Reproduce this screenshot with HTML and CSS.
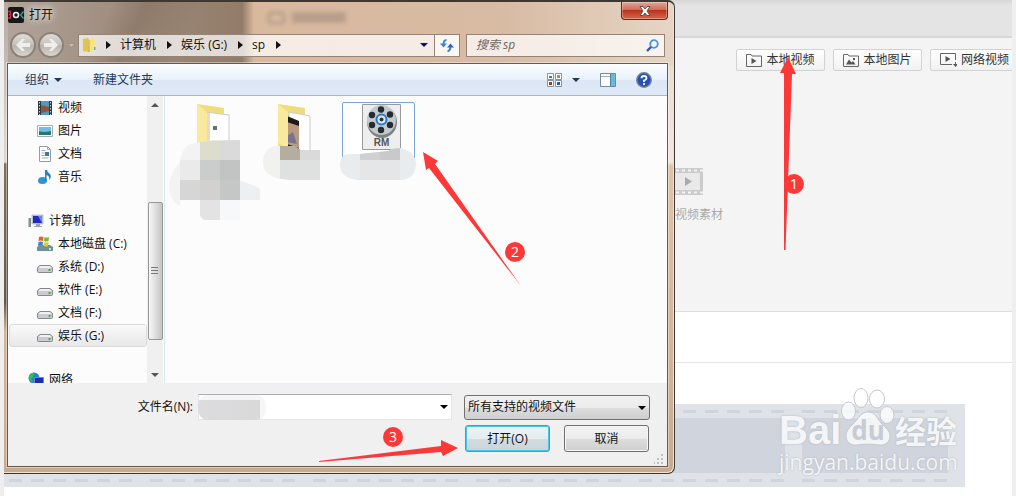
FILE: index.html
```html
<!DOCTYPE html>
<html lang="zh-CN">
<head>
    <meta charset="utf-8">
    <title>打开</title>
    <link rel="stylesheet" href="styles.css">
</head>
<body>
    <div class="app">
        <header class="app-header"></header>
        <section class="media">
            <div class="media-toolbar">
                <button class="media-btn">
                    <svg width="16" height="13" viewBox="0 0 16 13" fill="none" stroke="#666"><path d="M.5 12.500V.5H5l1 1.500H15.500V12.500Z"/><path d="M5.500 4v6l5-3z" fill="#555" stroke="none"/></svg>
                    本地视频
                </button>
                <button class="media-btn">
                    <svg width="16" height="13" viewBox="0 0 16 13" fill="none" stroke="#666"><path d="M.5 12.500V.5H5l1 1.500H15.500V12.500Z"/><path d="M3 10.500l3-5 2.500 3L10 7l2.500 3.500zM10 4h2v2h-2z" fill="#555" stroke="none"/></svg>
                    本地图片
                </button>
                <button class="media-btn">
                    <svg width="17" height="14" viewBox="0 0 17 14" fill="none" stroke="#666"><path d="M12 11.500H.5V.5H15.500V7M15.500 9v3"/><path d="M5.500 3v6l5-3zM13 11h5l-2.500 3z" fill="#555" stroke="none"/></svg>
                    网络视频
                </button>
            </div>
            <div class="placeholder">
                <svg width="30" height="27" viewBox="0 0 30 27"><path d="M0 0h30v27H0z" fill="#cbcbcb"/><path d="M0 5h27v17H0z" fill="#e9e9e9"/><path d="M3 2.500h27M3 24.500h27" stroke="#f4f4f4" stroke-width="2" stroke-dasharray="3 3"/><path d="M12 9v9l7-4.500z" fill="#aaa"/></svg>
                <span>视频素材</span>
            </div>
        </section>
        <section class="preview"></section>
        <section class="track-area">
            <div class="film">
                <div class="frame"></div>
                <div class="frame"></div>
                <div class="frame"></div>
                <div class="frame"></div>
                <div class="frame"></div>
                <div class="frame"></div>
            </div>
        </section>

        <!-- Watermark -->
        <div class="watermark">
            <div class="brand">
                <span class="bai">Bai</span>
                <span class="paw">
                    <svg width="54" height="60" viewBox="0 0 54 60" fill="#fff" fill-opacity=".75" stroke="#c4c8ce">
                        <ellipse cx="7.500" cy="23" rx="7" ry="9"/>
                        <ellipse cx="20" cy="10" rx="7" ry="9.500"/>
                        <ellipse cx="36" cy="11" rx="7.500" ry="9"/>
                        <ellipse cx="46" cy="27" rx="7" ry="8.500"/>
                        <path d="M27 24c-7 0-9 6-14 11-5 5-8 8-8 13 0 6 5 10 11 9 5-1 17-1 22 0 6 1 11-3 11-9 0-5-4-8-9-13-4-5-6-11-13-11z"/>
                    </svg>
                    <span class="du">du</span>
                </span>
                <span class="jy">经验</span>
            </div>
            <div class="site">jingyan.baidu.com</div>
        </div>

        <!-- Open file dialog -->
        <div class="dialog">
            <div class="glass-blur"><i></i><b></b></div>
            <div class="titlebar">
                <svg class="logo" width="16" height="16" viewBox="0 0 16 16"><rect width="16" height="16" rx="2" fill="#171717"/><circle cx="8" cy="8" r="2.500" fill="none" stroke="#eee" stroke-width="1.500"/><path d="M0 4.500h2.500v3H.5h2v3.500H0" fill="none" stroke="#d42a4c" stroke-width="1.300"/><path d="M15.500 4.500L12.500 8l3 3.500" fill="none" stroke="#25a9ad" stroke-width="1.300"/></svg>
                <span class="title">打开</span>
                <button class="close" aria-label="关闭">
                    <svg width="12" height="10" viewBox="0 0 12 10"><path d="M1 .5h3L6 3 8 .5h3L8 5l3 4.500H8L6 7 4 9.500H1L4 5z" fill="#fff" stroke="#6c4a48"/></svg>
                </button>
            </div>
            <div class="navbar">
                <div class="history">
                    <button class="round" aria-label="后退"><svg width="16" height="14" viewBox="0 0 16 14"><path d="M1 7l6-6h3L7 5h8v4H7l3 4H7z" fill="#f0eeec"/></svg></button>
                    <button class="round" aria-label="前进"><svg width="16" height="14" viewBox="0 0 16 14"><path d="M15 7L9 1H6l3 4H1v4h8l-3 4h3z" fill="#f0eeec"/></svg></button>
                    <svg width="7" height="5" viewBox="0 0 7 5"><path d="M0 .5h7L3.500 4.500z" fill="#c9bdb2" stroke="#897a6d" stroke-width=".5"/></svg>
                </div>
                <div class="address">
                    <svg width="14" height="16" viewBox="0 0 14 16"><path d="M1 2l5-1 1 1v13l-6-1z" fill="#dfc450"/><path d="M6 3l6-2 1 1v11l-6 2z" fill="#f6e386"/><path d="M7 3v12" stroke="#c9a63c"/><path d="M12 10h1.500v3H12z" fill="#55b2d8"/></svg>
                    <i class="sep"></i><a href="#">计算机</a>
                    <i class="sep"></i><a href="#">娱乐 (G:)</a>
                    <i class="sep"></i><a href="#">sp</a>
                    <i class="sep"></i>
                    <i class="caret"></i>
                    <button class="refresh" aria-label="刷新">
                        <svg width="14" height="13" viewBox="0 0 14 13" fill="none" stroke="#3b86cf" stroke-width="2"><path d="M6.500 1Q3.500 1 3.500 6"/><path d="M0 4.500h7L3.500 8.500z" fill="#3b86cf" stroke="none"/><path d="M7.500 12q3 0 3-5"/><path d="M7 8.500h7L10.500 4.500z" fill="#2a66b4" stroke="none"/></svg>
                    </button>
                </div>
                <div class="search">
                    <input type="text" placeholder="搜索 sp" aria-label="搜索">
                    <svg width="13" height="13" viewBox="0 0 13 13" fill="none"><circle cx="8" cy="5" r="3.800" stroke="#4a94d8" stroke-width="1.800"/><path d="M5 8l-4 4" stroke="#2d58a8" stroke-width="2.400"/></svg>
                </div>
            </div>
            <div class="client">
                <div class="toolbar">
                    <button class="tool">组织 <i class="caret"></i></button>
                    <button class="tool">新建文件夹</button>
                    <div class="view-tools">
                        <button class="tool views" aria-label="视图">
                            <svg width="15" height="14" viewBox="0 0 15 14"><path d="M.5.5h6v6h-6zM8.500.5h6v6h-6zM.5 7.500h6v6h-6zM8.500 7.500h6v6h-6z" fill="#fff" stroke="#8295a8"/><path d="M2 3h3v2H2z" fill="#2a8a9a"/><path d="M10 2h3v3h-3z" fill="#8aa82a"/><path d="M2 9h3v3H2z" fill="#b82e1c"/><path d="M10 9h3v3h-3z" fill="#255d9b"/></svg>
                            <i class="caret"></i>
                        </button>
                        <button class="tool" aria-label="预览窗格"><svg width="16" height="14" viewBox="0 0 16 14"><path d="M.5.5h15v13H.5z" fill="#fff" stroke="#7088a0"/><path d="M1 3.500h9" stroke="#a3b2c2"/><path d="M10 1h5v12h-5z" fill="#6db9d4"/><path d="M10.500 1v12" stroke="#4786a3"/></svg></button>
                        <button class="tool" aria-label="帮助"><svg width="16" height="16" viewBox="0 0 16 16"><circle cx="8" cy="8" r="7.200" fill="#2451b8" stroke="#777f8f" stroke-width="1.500"/><path d="M5.500 6.200Q5.500 4 8 4t2.500 2.200Q10.500 7.500 8 8.500V10M8 11v2" fill="none" stroke="#fff" stroke-width="1.800"/></svg></button>
                    </div>
                </div>
                <div class="body">
                    <nav class="sidebar">
                        <a href="#" class="item"><svg width="16" height="16" viewBox="0 0 16 16"><path d="M1 1h14v14H1z" fill="#2d3b45"/><path d="M4 1h8v14H4z" fill="#4c9bc4"/><path d="M4 5l8 2v4l-8 2z" fill="#94513a"/><path d="M2.500 2v13M13.500 2v13" stroke="#c5d0d6" stroke-dasharray="1.500 1.500"/></svg>视频</a>
                        <a href="#" class="item"><svg width="16" height="16" viewBox="0 0 16 16"><path d="M.5 2.500h15v11H.5z" fill="#fff" stroke="#a5adb3"/><path d="M2 4h12v8H2z" fill="#71bde6"/><path d="M2 8q4 2 12 0v4H2z" fill="#287868"/></svg>图片</a>
                        <a href="#" class="item"><svg width="16" height="16" viewBox="0 0 16 16"><path d="M2.500.5h8l3 3v12h-11z" fill="#fff" stroke="#969da3"/><path d="M10.500.5v3h3M4.500 4.500h4M4.500 7h3M4.500 9.500h3M4.500 12h7" fill="none" stroke="#9aaebe"/><path d="M8 6h4v4H8z" fill="#3c78a8"/></svg>文档</a>
                        <a href="#" class="item"><svg width="16" height="16" viewBox="0 0 16 16"><ellipse cx="5.500" cy="11.500" rx="4.500" ry="3.500" fill="#2c95d6"/><path d="M8 12V1h2q0 2 3 4 2 3-1 6 1-4-2.500-5v6z" fill="#2182c4"/></svg>音乐</a>
                        <a href="#" class="item root"><svg width="16" height="16" viewBox="0 0 16 16"><path d="M4 2h11v9H4z" fill="#c4ccd4" stroke="#8d98a3" stroke-width=".5"/><path d="M5 3h9v7H5z" fill="#2228c4"/><path d="M10 3h4v7z" fill="#6f86ec"/><path d="M8 11h4v2h2v1H6v-1h2z" fill="#9aa3ac"/><path d="M.5 5h2.500v9H.5z" fill="#84908d"/></svg>计算机</a>
                        <a href="#" class="item"><svg width="16" height="16" viewBox="0 0 16 16"><path d="M3 9h10l3 2v4H0v-4z" fill="#6f8f9a"/><path d="M2 1q2-1 4.500 0L6 5q-2-1-4.500 0z" fill="#e8622c"/><path d="M7.500 1q2 1 4.500 0l-.5 4q-2 1-4.500 0z" fill="#79b93c"/><path d="M1.500 6q2-1 4.500 0l-.5 4q-2-1-4.500 0z" fill="#3c86d8"/><path d="M7 6q2 1 4.500 0l-.5 4q-2 1-4.500 0z" fill="#f2c32e"/><path d="M12 12h2v2h-2z" fill="#bdf0a0"/></svg>本地磁盘 (C:)</a>
                        <a href="#" class="item"><svg width="16" height="16" viewBox="0 0 16 16"><path d="M3 6.500h10l2.500 2v4q0 1-1 1h-13q-1 0-1-1v-4z" fill="#c9cbcf" stroke="#84878c"/><path d="M1.500 9l2-2h9l2 2z" fill="#f1f1f3"/><path d="M11.500 10h2v2h-2z" fill="#4faa3e"/></svg>系统 (D:)</a>
                        <a href="#" class="item"><svg width="16" height="16" viewBox="0 0 16 16"><path d="M3 6.500h10l2.500 2v4q0 1-1 1h-13q-1 0-1-1v-4z" fill="#c9cbcf" stroke="#84878c"/><path d="M1.500 9l2-2h9l2 2z" fill="#f1f1f3"/><path d="M11.500 10h2v2h-2z" fill="#4faa3e"/></svg>软件 (E:)</a>
                        <a href="#" class="item"><svg width="16" height="16" viewBox="0 0 16 16"><path d="M3 6.500h10l2.500 2v4q0 1-1 1h-13q-1 0-1-1v-4z" fill="#c9cbcf" stroke="#84878c"/><path d="M1.500 9l2-2h9l2 2z" fill="#f1f1f3"/><path d="M11.500 10h2v2h-2z" fill="#4faa3e"/></svg>文档 (F:)</a>
                        <a href="#" class="item selected"><svg width="16" height="16" viewBox="0 0 16 16"><path d="M3 6.500h10l2.500 2v4q0 1-1 1h-13q-1 0-1-1v-4z" fill="#c9cbcf" stroke="#84878c"/><path d="M1.500 9l2-2h9l2 2z" fill="#f1f1f3"/><path d="M11.500 10h2v2h-2z" fill="#4faa3e"/></svg>娱乐 (G:)</a>
                        <a href="#" class="item root"><svg width="16" height="16" viewBox="0 0 16 16"><circle cx="6" cy="6" r="5.500" fill="#2386c8"/><path d="M1 4q3-4 5-3L5 5 3 6l2 4q-4-1-4-6z" fill="#35c04c"/><path d="M6.500 5.500h9v8h-9z" fill="#1c2cb4" stroke="#6d84cc"/></svg>网络</a>
                    </nav>
                    <div class="scrollbar">
                        <i class="up"></i>
                        <div class="thumb"><svg width="8" height="8" viewBox="0 0 8 8"><path d="M0 .5h7M0 3.500h7M0 6.500h7" stroke="#777"/></svg></div>
                        <i class="down"></i>
                    </div>
                    <div class="files">
                        <svg class="file" width="73" height="118" viewBox="0 0 73 118">
                            <path d="M17 2l27 4v8L28 44H17z" fill="#f1dc7d"/>
                            <path d="M26 10l23 3v32H26z" fill="#fff" stroke="#ccc"/>
                            <path d="M17 2l10 8v37l-10-8z" fill="#f8e99d"/>
                            <path d="M27 10v37l3-10V11z" fill="#d9c3a4" opacity=".6"/>
                            <path d="M33 24h4v4h-4z" fill="#63766e"/>
                            <clipPath id="blob1"><path d="M20 40q10-2 40-2v41q10 2 20 8v11H60v20H24l-4-4V98H0v6q-8-4-11-16-1-16 11-28 2-14 10-18z"/></clipPath>
                            <g clip-path="url(#blob1)">
                                <path d="M-20 38h100v80H-20z" fill="#f3f3f3"/>
                                <path d="M0 58h20v20H0z" fill="#eaeaea"/><path d="M0 78h20v20H0z" fill="#d6d6d6"/>
                                <path d="M20 38h20v20H20z" fill="#dedccb"/><path d="M40 38h20v20H40z" fill="#dadada"/>
                                <path d="M20 58h20v20H20z" fill="#cbcdcd"/><path d="M40 58h20v20H40z" fill="#c1c4c3"/>
                                <path d="M20 78h20v20H20z" fill="#d3d1d0"/><path d="M40 78h20v20H40z" fill="#c4c7c6"/>
                                <path d="M60 78h20v20H60z" fill="#edeff0"/><path d="M20 98h20v20H20z" fill="#e3e3e3"/><path d="M40 98h20v20H40z" fill="#f6f8fa"/>
                            </g>
                        </svg>
                        <svg class="file" width="73" height="118" viewBox="0 0 73 118">
                            <path d="M17 2l27 4v8L28 44H17z" fill="#f1dc7d"/>
                            <path d="M28 10l21 4v38l-21-4z" fill="#fff" stroke="#ccc"/>
                            <path d="M26 14l12 5v33l-12-5z" fill="#1d1a19"/>
                            <path d="M26 20l12 4v22l-12-4z" fill="#b99a7e"/><path d="M26 34l6-4 4 12-10-2z" fill="#777491"/>
                            <path d="M17 2l10 8v37l-10-6z" fill="#f8e99d"/>
                            <clipPath id="blob2"><path d="M14 44h20l6 4h19v30H28Q2 76 2 61q0-14 12-17z"/></clipPath>
                            <g clip-path="url(#blob2)">
                                <path d="M0 44h19v34H0z" fill="#f1f1f0"/><path d="M19 44h20v14H19z" fill="#b4ae9f"/>
                                <path d="M39 44h20v14H39z" fill="#dadada"/><path d="M19 58h40v20H19z" fill="#dfe0e0"/>
                            </g>
                        </svg>
                        <svg class="file" width="73" height="118" viewBox="0 0 73 118">
                            <path d="M.5 56V2q0-1.500 1.500-1.500h69q1.500 0 1.500 1.500v54" fill="#fff" stroke="#79a6d8"/>
                            <path d="M20.500 2.500h38v45h-38z" fill="#eeeeef" stroke="#999"/>
                            <ellipse cx="40" cy="20" rx="15" ry="16" fill="#7d8286"/>
                            <ellipse cx="39.500" cy="18" rx="14.500" ry="15" fill="#c4c9cc"/>
                            <g fill="#252b30"><circle cx="39" cy="7.500" r="3.200"/><circle cx="30" cy="13" r="3.200"/><circle cx="48" cy="12.500" r="3.200"/><circle cx="30" cy="23" r="3.200"/><circle cx="48" cy="23" r="3.200"/><circle cx="39" cy="28" r="3.200"/></g>
                            <circle cx="39.500" cy="17.500" r="5" fill="#d9eaf5" stroke="#2878d0" stroke-width="2"/><circle cx="39.500" cy="17.500" r="2" fill="#333"/>
                            <text x="39.500" y="44" class="ext">RM</text>
                            <clipPath id="blob3"><path d="M18 52l28-3q4-3 12-3 16 3 16 17-1 13-14 15H16Q-2 76-2 63-2 52 8 52z"/></clipPath>
                            <g clip-path="url(#blob3)">
                                <path d="M-2 46h76v32H-2z" fill="#e8ecef"/><path d="M18 46h20v12H18z" fill="#d0d0d1"/>
                                <path d="M38 46h20v12H38z" fill="#c8c9ca"/><path d="M18 58h40v20H18z" fill="#e4e6e8"/>
                            </g>
                        </svg>
                    </div>
                </div>
                <div class="footer">
                    <div class="row">
                        <label for="filename">文件名(N):</label>
                        <div class="filename">
                            <input type="text" id="filename">
                            <i class="smudge"></i>
                            <i class="caret"></i>
                        </div>
                        <div class="filter">
                            <select aria-label="文件类型"><option>所有支持的视频文件</option></select>
                            <i class="caret"></i>
                        </div>
                    </div>
                    <div class="row actions">
                        <button class="btn primary">打开(O)</button>
                        <button class="btn">取消</button>
                    </div>
                    <svg class="grip" width="10" height="10" viewBox="0 0 10 10"><path d="M7 0h2v2H7zM7 4h2v2H7zM7 8h2v2H7zM3 4h2v2H3zM3 8h2v2H3zM0 8h1v2H0z" fill="#c0c0c0"/></svg>
                </div>
            </div>
        </div>

        <!-- Step arrows -->
        <svg class="steps" width="1008" height="496" viewBox="4 0 1008 496">
            <g fill="#fd3838">
                <path d="M788 57l8 17h-4L785.500 250h-1.500V73h-4z"/>
                <path d="M423 152l15 9-3 3 86 122-92-118-3 2z"/>
                <path d="M458 448l-15 8-2-4-122 10v-1l122-15v-6z"/>
                <circle cx="794" cy="184" r="10"/>
                <circle cx="515" cy="252" r="10"/>
                <circle cx="393" cy="437" r="10"/>
            </g>
            <text x="794" y="189">1</text>
            <text x="515" y="257">2</text>
            <text x="393" y="442">3</text>
        </svg>
    </div>
</body>
</html>
```
FILE: styles.css
```css
* {
    box-sizing: border-box;
}
body {
    margin: 0;
    font-family: "Open Sans", "Noto Sans CJK SC", sans-serif;
    font-size: 12px;
    line-height: 16px;
    color: #111;
    background: #efefef;
}
button, input, select {
    font: inherit;
    color: inherit;
}
button {
    padding: 0;
    border: none;
    background: none;
    white-space: nowrap;
}
a {
    color: inherit;
    text-decoration: none;
}
svg {
    display: block;
    flex: none;
}
.app {
    position: relative;
    min-height: 100vh;
    margin: 0 4px;
    background: #fff;
    overflow: hidden;
}
.app-header {
    height: 38px;
    background: linear-gradient(#d8d8d8, #e4e4e4 6px);
    border-bottom: 2px solid #d8d8d8;
}
.media {
    height: 274px;
    padding-top: 11px;
    background: #f4f4f4;
    border-bottom: 1px solid #ddd;
}
.media-toolbar {
    display: flex;
    justify-content: flex-end;
    gap: 8px;
    margin-right: -7px;
}
.media-btn {
    display: flex;
    align-items: center;
    justify-content: center;
    gap: 4px;
    width: 89px;
    height: 22px;
    border: 1px solid #d2d2d2;
    border-radius: 2px;
    background: linear-gradient(#fff, #f1f1f1);
    color: #333;
}
.placeholder {
    padding: 97px 0 0 669px;
    color: #aaa;
}
.placeholder span {
    display: block;
    margin: 12px 0 0 2px;
}
.preview {
    height: 51px;
    border-bottom: 1px solid #e6e6e6;
}
.track-area {
    padding: 41px 47px 9px 0;
}
.film {
    display: flex;
    justify-content: flex-end;
    gap: 17px;
    height: 83px;
    padding: 6px 17px 5px 0;
    background: #dfe3e7;
    overflow: hidden;
}
.frame {
    flex: none;
    display: flex;
    flex-direction: column;
    justify-content: space-between;
    width: 146px;
    background: linear-gradient(#d0d4dc, #d0d4dc) 0 8px / 100% 55px no-repeat;
}
.frame::before, .frame::after {
    content: "";
    height: 3px;
    background: repeating-linear-gradient(90deg, #d0d4dc 0 13px, transparent 13px 22px);
}

/* watermark */
.watermark {
    position: absolute;
    right: 49px;
    bottom: 20px;
    width: 184px;
    color: #f3f5f7;
    text-shadow: 0 0 2px #a9afb9;
}
.brand {
    display: flex;
    align-items: flex-end;
    height: 60px;
}
.bai {
    width: 62px;
    font: bold 40px/36px "Liberation Sans", sans-serif;
}
.paw {
    position: relative;
}
.du {
    position: absolute;
    left: 0;
    bottom: 4px;
    width: 54px;
    text-align: center;
    font: bold 26px/28px "Open Sans", sans-serif;
    color: #c6cbd4;
    text-shadow: none;
}
.jy {
    font-size: 31px;
    line-height: 34px;
    font-weight: 700;
}
.site {
    font: 21px/28px "Open Sans", sans-serif;
}

/* dialog window */
.dialog {
    position: absolute;
    left: 0;
    top: 0;
    width: 671px;
    padding: 0 6px 6px 3px;
    border: solid #3e3835;
    border-width: 2px 1px 1px 0;
    border-radius: 0 7px 7px 0;
    background:
        linear-gradient(#b8a99d, #ded8d3 160px, #85705f 162px, #66584e 300px, #d3b498 330px, #c8aa90) left / 4px 100% no-repeat,
        linear-gradient(115deg, transparent 40%, rgba(90, 65, 45, 0.2) 52%, transparent 72%) left top / 245px 62px no-repeat,
        linear-gradient(90deg, #b1a59b, #a18f81 100px, #927c69 238px, #d9b99e 250px, #d8bba3 500px, #e6d5c5) left top / 100% 64px no-repeat,
        linear-gradient(90deg, #c8aa90 640px, transparent 660px),
        linear-gradient(#e6d5c5, #efe8e0 160px, #dfc4aa 164px, #c8aa90);
    box-shadow: inset -1px -1px 0 #f0e0d2;
}
.glass-blur {
    position: absolute;
    left: 264px;
    top: 10px;
    display: flex;
    gap: 7px;
    filter: blur(2px);
}
.glass-blur i {
    width: 17px;
    height: 12px;
    border: 2px solid #a99382;
    border-radius: 3px;
}
.glass-blur b {
    width: 54px;
    height: 11px;
    background: #b89f8b;
}
.titlebar {
    display: flex;
    align-items: flex-start;
    height: 28px;
}
.logo {
    margin: 5px 5px 0 1px;
}
.title {
    margin-top: 5px;
    text-shadow: 0 0 8px #fff, 0 0 6px #fff;
}
.close {
    display: flex;
    align-items: center;
    justify-content: center;
    width: 47px;
    height: 18px;
    margin-left: auto;
    border: 1px solid #54302c;
    border-top: none;
    border-radius: 0 0 4px 4px;
    background: linear-gradient(#dda79a, #cf6d5a 45%, #b8331c 50%, #d4694c);
    box-shadow: inset 0 0 0 1px rgba(255, 255, 255, 0.3);
}
.navbar {
    display: flex;
    align-items: center;
    height: 30px;
    padding: 0 3px;
}
.history {
    display: flex;
    align-items: center;
    gap: 2px;
    width: 68px;
}
.round {
    display: flex;
    align-items: center;
    justify-content: center;
    flex: none;
    width: 26px;
    height: 26px;
    border: 2px solid #8a8178;
    border-radius: 50%;
    background: linear-gradient(#dedad6, #c6c0ba 50%, #b9b2ab 51%, #dad5d0);
}
.history .round + svg {
    margin-left: 2px;
}
.address {
    display: flex;
    align-items: center;
    width: 382px;
    height: 23px;
    padding-left: 3px;
    border: 1px solid #948477;
    background: rgba(255, 255, 255, 0.72);
}
.sep {
    width: 0;
    height: 0;
    border: solid transparent;
    border-width: 4px 0 4px 5px;
    border-left-color: #111;
    margin: 0 9px 0 11px;
}
.sep:first-of-type {
    margin-left: 10px;
}
.caret {
    flex: none;
    width: 0;
    height: 0;
    border: solid transparent;
    border-width: 4px 4px 0;
    border-top-color: currentColor;
}
.address .caret {
    margin: 0 6px 0 auto;
    color: #0a1060;
}
.refresh {
    display: flex;
    align-items: center;
    justify-content: center;
    width: 25px;
    height: 21px;
    border-left: 1px solid #948477;
    background: rgba(255, 255, 255, 0.5);
}
.search {
    display: flex;
    align-items: center;
    flex: 1;
    height: 23px;
    margin-left: 6px;
    padding: 0 5px 0 9px;
    border: 1px solid #948477;
    background: rgba(255, 255, 255, 0.72);
}
.search input {
    flex: 1;
    min-width: 0;
    padding: 0;
    border: none;
    background: none;
}
.search input::placeholder {
    color: #6d6863;
    font-style: italic;
}
.client {
    margin-top: 3px;
    border: 1px solid #655a52;
    background: #f0f0f0;
    box-shadow: 0 0 0 1px rgba(255, 255, 255, 0.4);
}
.toolbar {
    display: flex;
    align-items: center;
    gap: 31px;
    height: 32px;
    padding: 0 15px 0 17px;
    border-bottom: 1px solid #a9b6cc;
    background: linear-gradient(#fbfdff, #e8f1fa 50%, #dce6f4 51%, #dfe9f6);
    color: #1e395b;
}
.tool {
    display: flex;
    align-items: center;
    gap: 5px;
}
.view-tools {
    display: flex;
    gap: 20px;
    margin-left: auto;
}
.views {
    gap: 10px;
}
.body {
    display: flex;
    height: 287px;
    background: #fcfcfc;
    overflow: hidden;
}
.sidebar {
    width: 139px;
}
.item {
    display: flex;
    align-items: center;
    gap: 5px;
    height: 23px;
    padding-left: 29px;
    white-space: nowrap;
}
.item.root {
    margin-top: 21px;
    padding-left: 20px;
}
.item.selected {
    margin-left: 1px;
    padding-left: 27px;
    border: 1px solid #dcdcdc;
    border-radius: 3px;
    background: linear-gradient(#f9f9f9, #e8e8e8);
}
.scrollbar {
    display: flex;
    flex-direction: column;
    align-items: center;
    width: 16px;
    padding: 7px 0 6px;
    background: #f0f0f0;
}
.scrollbar .up, .scrollbar .down {
    border: solid transparent;
    border-width: 0 4px 4px;
    border-bottom-color: #555;
}
.scrollbar .down {
    border-width: 4px 4px 0;
    border-top-color: #555;
    margin-top: auto;
}
.thumb {
    display: flex;
    align-items: center;
    justify-content: center;
    width: 15px;
    height: 138px;
    margin-top: 95px;
    border: 1px solid #979797;
    border-radius: 2px;
    background: linear-gradient(90deg, #f6f6f6, #dedede 50%, #c4c4c4);
}
.files {
    flex: 1;
    display: flex;
    gap: 8px;
    margin-left: 1px;
    padding: 6px 0 0 15px;
    border-left: 1px solid #d6e5f5;
}
.file {
    overflow: visible;
}
.ext {
    font: bold 10px "Liberation Sans", sans-serif;
    fill: #555;
    text-anchor: middle;
}
.footer {
    position: relative;
    padding: 11px 17px 14px;
}
.row {
    display: flex;
    justify-content: flex-end;
    align-items: center;
}
.filename {
    position: relative;
    width: 254px;
    margin: 0 12px 0 5px;
}
.filename input {
    display: block;
    width: 100%;
    height: 26px;
    padding: 0 24px 0 6px;
    border: 1px solid #e3e5ea;
    border-top-color: #abadb3;
    background: #fff;
}
.smudge {
    position: absolute;
    left: 0;
    top: 1px;
    width: 68px;
    height: 25px;
    border-radius: 10px;
    background: linear-gradient(90deg, #dcdcde, #d9d9da 62px, #f7f7f7 62px) 0 5px / 100% 20px no-repeat #f4f4f4;
}
.filename .caret, .filter .caret {
    position: absolute;
    right: 4px;
    top: 11px;
    color: #000;
    pointer-events: none;
}
.filter {
    position: relative;
    width: 186px;
}
.filter select {
    display: block;
    width: 100%;
    height: 25px;
    padding: 0 20px 0 3px;
    border: 1px solid #707070;
    border-radius: 3px;
    appearance: none;
    background: linear-gradient(#f2f2f2, #ebebeb 50%, #dddddd 51%, #cfcfcf);
}
.actions {
    gap: 14px;
    margin: 5px 1px 0 0;
}
.btn {
    width: 85px;
    height: 27px;
    border: 1px solid #707070;
    border-radius: 3px;
    background: linear-gradient(#f2f2f2, #ebebeb 50%, #dddddd 51%, #cfcfcf);
    box-shadow: inset 0 0 0 1px #f6f6f6;
}
.btn.primary {
    border-color: #3c9fc8;
    background: linear-gradient(#eef3f5, #e4ecef 50%, #d3dde1 51%, #c8d4d8);
    box-shadow: inset 0 0 0 1px #46c8ee;
}
.grip {
    position: absolute;
    right: 3px;
    bottom: 2px;
}

/* step arrows */
.steps {
    position: absolute;
    left: 0;
    top: 0;
    pointer-events: none;
}
.steps text {
    font: 14px "Open Sans", sans-serif;
    fill: #fff;
    text-anchor: middle;
}
```
